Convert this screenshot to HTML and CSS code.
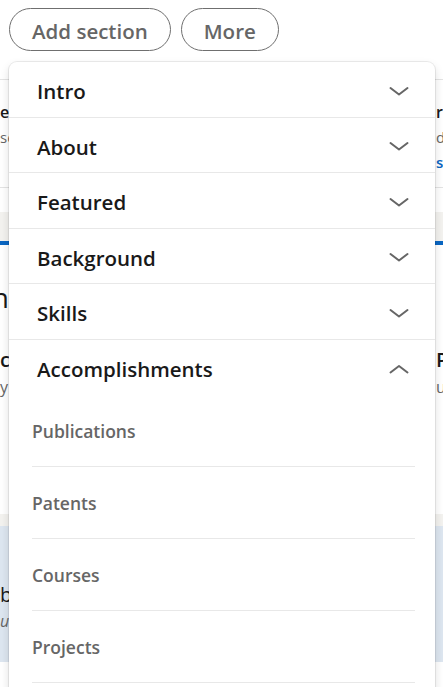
FILE: index.html
```html
<!DOCTYPE html>
<html lang="en">
<head>
<meta charset="utf-8">
<title>Profile sections</title>
<link rel="stylesheet" href="styles.css">
</head>
<body>
<div class="page">
  <section class="card top-card">
    <div class="actions">
      <button class="pill">Add section</button>
      <button class="pill">More</button>
    </div>
    <div class="carousel">
      <div class="col-left">
        <div class="t-bold">e</div>
        <div class="t-muted">se</div>
      </div>
      <div class="col-right">
        <div class="t-bold">rc</div>
        <div class="t-muted">d</div>
        <div class="t-link">s</div>
      </div>
    </div>
  </section>
  <div class="gap gap-lg"></div>
  <section class="card accent-card">
    <div class="col-left heading">n</div>
    <div class="pair">
      <div class="col-left">
        <div class="t-title">c</div>
        <div class="t-muted">y</div>
      </div>
      <div class="col-right">
        <div class="t-title">P</div>
        <div class="t-muted">u</div>
      </div>
    </div>
  </section>
  <div class="gap gap-sm"></div>
  <section class="card tinted-card">
    <div class="col-left">
      <div class="t-large">b</div>
      <div class="t-italic">u</div>
    </div>
  </section>
</div>

<div class="dropdown">
  <div class="menu-row"><span>Intro</span><svg class="chev" viewBox="0 0 20 10"><path d="M1.5 2 L10 8.5 L18.5 2"/></svg></div>
  <div class="menu-row"><span>About</span><svg class="chev" viewBox="0 0 20 10"><path d="M1.5 2 L10 8.5 L18.5 2"/></svg></div>
  <div class="menu-row"><span>Featured</span><svg class="chev" viewBox="0 0 20 10"><path d="M1.5 2 L10 8.5 L18.5 2"/></svg></div>
  <div class="menu-row"><span>Background</span><svg class="chev" viewBox="0 0 20 10"><path d="M1.5 2 L10 8.5 L18.5 2"/></svg></div>
  <div class="menu-row"><span>Skills</span><svg class="chev" viewBox="0 0 20 10"><path d="M1.5 2 L10 8.5 L18.5 2"/></svg></div>
  <div class="menu-row open"><span>Accomplishments</span><svg class="chev" viewBox="0 0 20 10"><path d="M1.5 8.5 L10 2 L18.5 8.5"/></svg></div>
  <ul class="sub-list">
    <li>Publications</li>
    <li>Patents</li>
    <li>Courses</li>
    <li>Projects</li>
  </ul>
</div>
</body>
</html>
```
FILE: styles.css
```css
html, body {
  margin: 0;
  padding: 0;
}
body {
  width: 443px;
  height: 687px;
  overflow: hidden;
  position: relative;
  background: #ffffff;
  font-family: "Open Sans", "Noto Sans", sans-serif;
  color: #191919;
}
.page {
  display: flex;
  flex-direction: column;
}
.card {
  background: #ffffff;
}
.top-card {
  padding-bottom: 24px;
}
.actions {
  display: flex;
  gap: 10px;
  padding: 8px 9px 28px;
  height: 43px;
  border-bottom: 1px solid #e3e3e3;
}
.pill {
  height: 43px;
  padding: 3px 22px 0;
  border: 1px solid #6f6f6f;
  border-radius: 22px;
  background: #ffffff;
  color: #666666;
  font-family: inherit;
  font-weight: 600;
  font-size: 20.5px;
  line-height: 1;
}
.carousel {
  display: flex;
  justify-content: space-between;
  padding: 20px 0 12px;
  border-bottom: 1px solid #e3e3e3;
}
.col-left {
  width: 9px;
  white-space: nowrap;
  overflow: hidden;
}
.col-right {
  width: 7px;
  white-space: nowrap;
  overflow: hidden;
}
.t-bold {
  font-weight: 600;
  font-size: 16px;
  line-height: 25px;
  color: #191919;
}
.t-muted {
  font-size: 15px;
  line-height: 25px;
  color: #666666;
}
.t-link {
  font-weight: 600;
  font-size: 15px;
  line-height: 25px;
  color: #0a66c2;
}
.gap {
  background: #f3f2ef;
}
.gap-lg { height: 29px; }
.gap-sm { height: 12px; }
.accent-card {
  border-top: 4px solid #0a66c2;
  padding-top: 34px;
  box-sizing: border-box;
  height: 273px;
}
.heading {
  font-size: 28px;
  line-height: 36px;
  color: #191919;
  direction: rtl;
  text-align: right;
}
.pair {
  display: flex;
  justify-content: space-between;
  margin-top: 31px;
}
.t-title {
  font-weight: 600;
  font-size: 20px;
  line-height: 28px;
  color: #191919;
}
.pair .t-muted {
  line-height: 26px;
  font-size: 16px;
}
.tinted-card {
  background: #dde6f0;
  height: 136px;
  box-sizing: border-box;
  padding-top: 55px;
}
.t-large {
  font-size: 20px;
  line-height: 28px;
  color: #191919;
}
.t-italic {
  font-style: italic;
  font-size: 16px;
  line-height: 24px;
  color: #666666;
}

/* dropdown overlay */
.dropdown {
  position: absolute;
  left: 9px;
  top: 62px;
  width: 426px;
  bottom: -60px;
  background: #ffffff;
  border-radius: 8px;
  box-shadow: 0 0 0 1px rgba(0, 0, 0, 0.07), 0 4px 10px rgba(0, 0, 0, 0.14);
  overflow: hidden;
}
.menu-row {
  display: flex;
  align-items: center;
  justify-content: space-between;
  height: 54.5px;
  box-sizing: content-box;
  padding: 0 26px 0 28px;
  border-bottom: 1px solid #e8e8e8;
  font-size: 20.5px;
  font-weight: 600;
  color: #191919;
}
.menu-row span {
  padding-top: 4px;
}
.menu-row .chev {
  margin-top: 3px;
}
.menu-row.open {
  border-bottom: none;
  height: 55.5px;
}
.chev {
  width: 20px;
  height: 10px;
  fill: none;
  stroke: #666666;
  stroke-width: 2;
  stroke-linecap: round;
  stroke-linejoin: round;
}
.sub-list {
  list-style: none;
  margin: 0 20px 0 23px;
  padding: 0;
}
.sub-list li {
  display: flex;
  align-items: center;
  box-sizing: border-box;
  height: 72px;
  padding-top: 1px;
  border-bottom: 1px solid #e8e8e8;
  font-size: 17.5px;
  font-weight: 600;
  color: #666666;
}
```
